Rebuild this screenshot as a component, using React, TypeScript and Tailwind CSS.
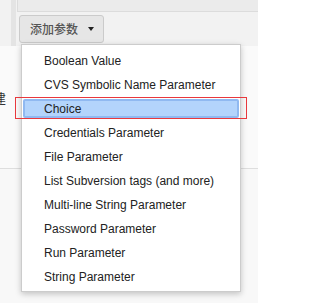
const items = [
  "Boolean Value",
  "CVS Symbolic Name Parameter",
  "Choice",
  "Credentials Parameter",
  "File Parameter",
  "List Subversion tags (and more)",
  "Multi-line String Parameter",
  "Password Parameter",
  "Run Parameter",
  "String Parameter",
];

export default function App() {
  return (
    <div className="relative w-[258px] h-[303px] overflow-hidden bg-[#f8f8f8] text-[#333] font-['Liberation_Sans',Arial,'Noto_Sans_CJK_SC',sans-serif]">
      {/* top toolbar area */}
      <div className="flex h-[46px] bg-[#f2f2f2]">
        <div className="w-[11px]" />
        <div className="w-[5px] bg-[#e4e4e4]" />
        <div className="w-px" />
        <div className="flex-1 flex flex-col">
          <div className="h-[12px] bg-[#ebebeb] border-l border-b border-[#dcdcdc]" />
          <div className="pl-[2px] pt-[3px]">
            <button className="flex items-center h-[28px] w-[85px] pl-[10px] bg-[#e6e6e6] border border-[#cbcbcb] rounded-[3px] text-[12px] font-medium text-[#555] font-['Noto_Sans_CJK_SC',sans-serif]">
              添加参数
              <span className="ml-[10px] w-0 h-0 border-l-[3.5px] border-r-[3.5px] border-t-[4px] border-l-transparent border-r-transparent border-t-[#222]" />
            </button>
          </div>
        </div>
      </div>

      {/* page content below */}
      <div className="flex flex-col">
        <div className="h-[123px] border-b border-[#dedede] bg-[#fafafa]">
          <div className="ml-[-7px] mt-[45px] text-[13px] leading-[14px] font-['Noto_Sans_CJK_SC',sans-serif]">
            建
          </div>
        </div>
      </div>

      {/* dropdown menu */}
      <div className="absolute left-[21px] top-[44px] w-[220px] pt-[4px] pb-[2px] bg-white border border-[#cccccc] shadow-[0_2px_6px_rgba(0,0,0,0.22)]">
        {items.map((item) =>
          item === "Choice" ? (
            <div key={item} className="h-[24px] py-[2px] px-px">
              <div className="h-[19px] flex items-center pl-[19px] bg-[#b3d4fc] border-2 border-[#90b9f1] rounded-[2px] text-[12px] text-[#222]">
                {item}
              </div>
            </div>
          ) : (
            <div key={item} className="h-[24px] flex items-center pl-[22px] text-[12px] text-[#222]">
              {item}
            </div>
          )
        )}
      </div>

      {/* annotation */}
      <div className="absolute left-[15px] top-[97px] w-[232px] h-[22px] border border-[#e8383d]" />
    </div>
  );
}
